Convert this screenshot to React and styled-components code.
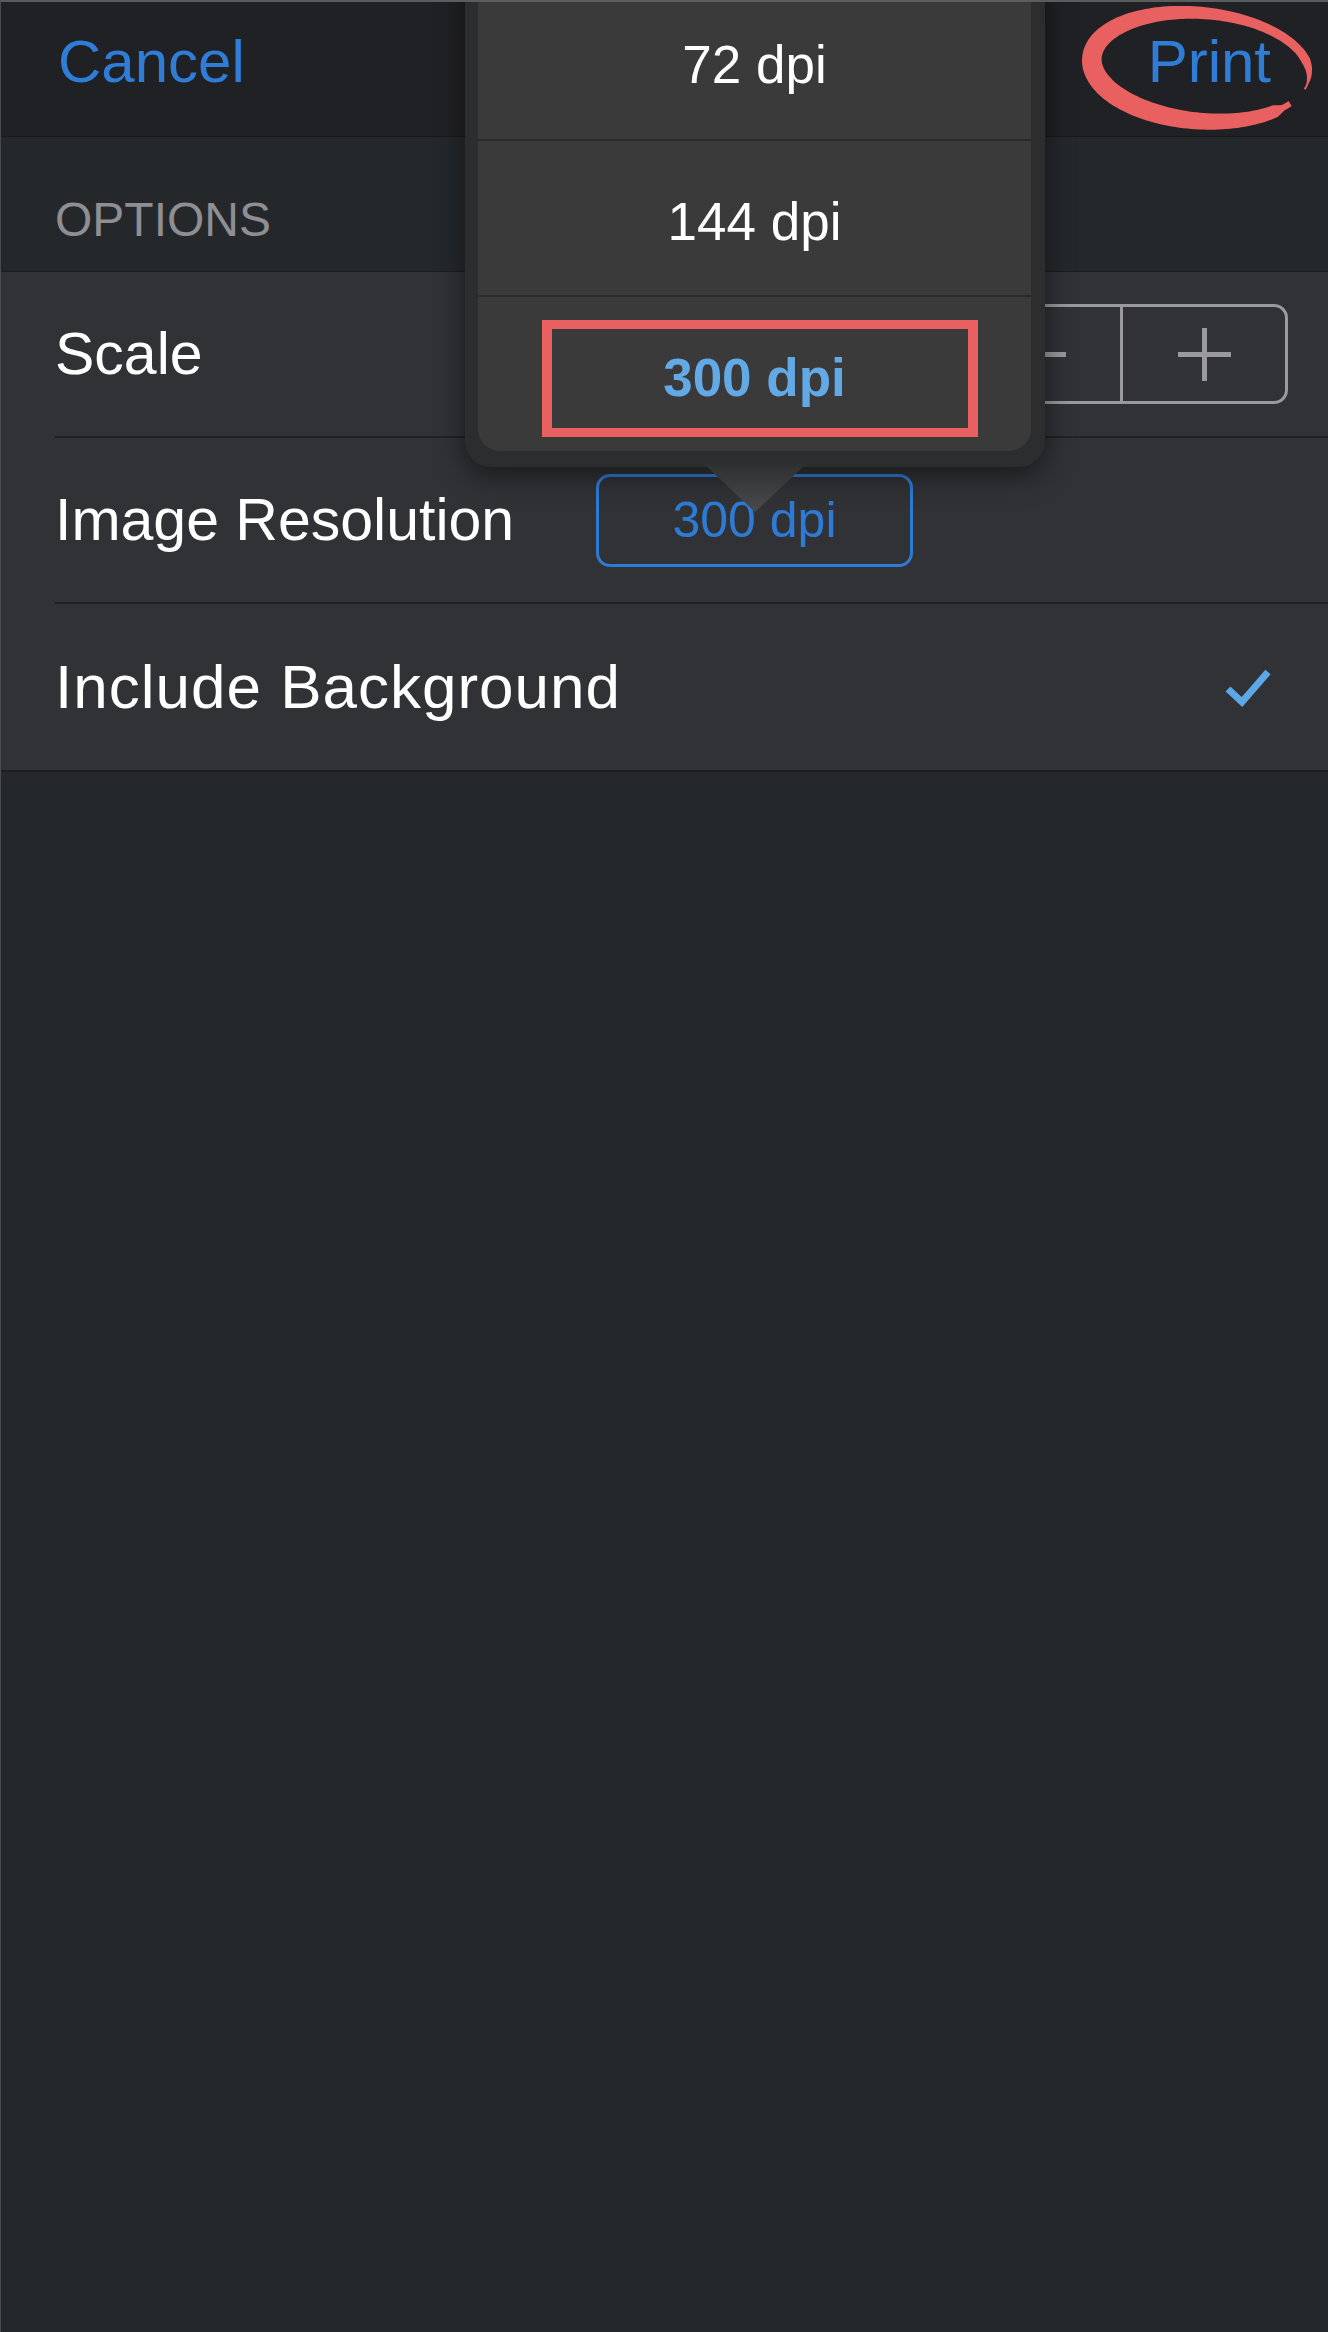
import React from 'react';
import styled, { createGlobalStyle } from 'styled-components';

const GlobalStyle = createGlobalStyle`
  html, body {
    margin: 0;
    padding: 0;
    background: #25282b;
  }
  body {
    font-family: "Liberation Sans", Arial, sans-serif;
  }
  * {
    box-sizing: border-box;
  }
`;

const Screen = styled.div`
  position: relative;
  width: 1328px;
  height: 2332px;
  overflow: hidden;
  display: flex;
  flex-direction: column;
  background: #25282b;
  border-top: 2px solid #5b5c5e;
  border-left: 1px solid #4a4b4d;
`;

const NavBar = styled.header`
  position: relative;
  flex: none;
  height: 135px;
  display: flex;
  align-items: center;
  justify-content: space-between;
  padding: 0 57px 14px;
  background: #202124;
  border-bottom: 1px solid #19191b;
`;

const NavButton = styled.button`
  border: none;
  background: none;
  padding: 0;
  font-family: inherit;
  font-size: 60px;
  line-height: 60px;
  color: #2f7dd7;
`;

const Circled = styled.svg`
  position: absolute;
  top: 0;
  right: 0;
  width: 258px;
  height: 135px;
  pointer-events: none;
`;

const SectionHeader = styled.div`
  flex: none;
  height: 134px;
  display: flex;
  align-items: flex-end;
  padding: 0 0 27px 54px;
  font-size: 48px;
  line-height: 48px;
  color: #8e8e93;
  text-transform: uppercase;
`;

const Group = styled.section`
  flex: none;
  background: #313236;
  border-top: 1px solid #1d1e20;
  border-bottom: 2px solid #1d1e20;
`;

const Row = styled.div`
  height: 166px;
  padding-left: 54px;
`;

const RowInner = styled.div`
  height: 100%;
  display: flex;
  align-items: center;
  padding-right: 40px;
  border-bottom: ${(p) => (p.$last ? 'none' : '2px solid #212225')};
`;

const Label = styled.div`
  flex: ${(p) => (p.$width ? `0 0 ${p.$width}px` : '1')};
  font-size: ${(p) => p.$size || 59}px;
  letter-spacing: ${(p) => p.$spacing || 0}px;
  line-height: 1;
  color: #ffffff;
`;

const Stepper = styled.div`
  margin-left: auto;
  display: flex;
  width: 333px;
  height: 100px;
  border: 3px solid #9a9a9e;
  border-radius: 14px;
  overflow: hidden;
`;

const StepperHalf = styled.div`
  flex: 1;
  display: flex;
  align-items: center;
  justify-content: center;

  & + & {
    border-left: 3px solid #9a9a9e;
  }
`;

const ResolutionButton = styled.div`
  width: 317px;
  height: 93px;
  display: flex;
  align-items: center;
  justify-content: center;
  border: 3px solid #2e7bd5;
  border-radius: 14px;
  font-size: 50px;
  line-height: 1;
  color: #2e7bd5;
`;

const Check = styled.svg`
  margin-left: auto;
  margin-right: 16px;
  width: 48px;
  height: 44px;
`;

const Popover = styled.div`
  position: absolute;
  top: -32px;
  left: 464px;
  width: 580px;
  padding: 13px 14px 16px 13px;
  background: #2c2d2f;
  border-radius: 26px;
  box-shadow: 0 8px 28px rgba(0, 0, 0, 0.5);
  z-index: 5;
`;

const OptionList = styled.div`
  background: #3a3a3a;
  border-radius: 22px;
  overflow: hidden;
`;

const Option = styled.div`
  position: relative;
  height: 156px;
  display: flex;
  align-items: center;
  justify-content: center;
  padding-top: 6px;
  border-top: ${(p) => (p.$first ? 'none' : '2px solid #2a2a2b')};
  font-size: 53px;
  line-height: 1;
  font-weight: ${(p) => (p.$selected ? 700 : 400)};
  color: ${(p) => (p.$selected ? '#63a9e6' : '#ffffff')};
`;

const Highlight = styled.div`
  position: absolute;
  top: 23px;
  left: 64px;
  right: 53px;
  bottom: 14px;
  border: solid #e8605f;
  border-width: 9px 10px;
`;

const Arrow = styled.svg`
  position: absolute;
  top: calc(100% - 4px);
  left: 50%;
  transform: translateX(-50%);
  width: 104px;
  height: 49px;
`;

// hand drawn ring around "Print", in page coordinates
const brushPath = (() => {
  const cx = 1200.5;
  const cy = 67;
  const rx = 109;
  const ry = 54;
  const rot = (5 * Math.PI) / 180;
  const t0 = 32;
  const t1 = 374;
  const outer = [];
  const inner = [];
  const turn = ([x, y]) => [
    cx + x * Math.cos(rot) - y * Math.sin(rot),
    cy + x * Math.sin(rot) + y * Math.cos(rot),
  ];
  for (let d = t0; d <= t1; d += 2) {
    const t = (d * Math.PI) / 180;
    let w = 14.5 - 5 * Math.cos(t) + 2.5 * Math.sin(t);
    w *= Math.min(1, Math.max(0.5, (d - t0) / 12));
    w *= Math.min(1, Math.max(0.2, (t1 - d) / 30));
    const px = Math.cos(t);
    const py = Math.sin(t);
    let nx = px / rx;
    let ny = py / ry;
    const nl = Math.hypot(nx, ny);
    nx /= nl;
    ny /= nl;
    const mx = rx * px;
    const my = ry * py;
    outer.push(turn([mx + (nx * w) / 2, my + (ny * w) / 2]));
    inner.push(turn([mx - (nx * w) / 2, my - (ny * w) / 2]));
  }
  const pts = [...outer, ...inner.reverse()];
  return 'M' + pts.map((p) => p.map((v) => v.toFixed(1)).join(' ')).join(' L') + ' Z';
})();

const options = [
  { label: '72 dpi' },
  { label: '144 dpi' },
  { label: '300 dpi', selected: true },
];

const Plus = ({ minus }) => (
  <svg width="53" height="53" viewBox="0 0 53 53">
    <line x1="0" y1="26.5" x2="53" y2="26.5" stroke="#9a9a9e" strokeWidth="5" />
    {!minus && <line x1="26.5" y1="0" x2="26.5" y2="53" stroke="#9a9a9e" strokeWidth="5" />}
  </svg>
);

const App = () => {
  return (
    <>
      <GlobalStyle />
      <Screen>
        <NavBar>
          <NavButton>Cancel</NavButton>
          <NavButton>Print</NavButton>
          <Circled viewBox="1070 2 258 135">
            <path d={brushPath} fill="#e8605f" />
          </Circled>
        </NavBar>

        <SectionHeader>Options</SectionHeader>

        <Group>
          <Row>
            <RowInner>
              <Label>Scale</Label>
              <Stepper>
                <StepperHalf>
                  <Plus minus />
                </StepperHalf>
                <StepperHalf>
                  <Plus />
                </StepperHalf>
              </Stepper>
            </RowInner>
          </Row>
          <Row>
            <RowInner>
              <Label $width={541}>Image Resolution</Label>
              <ResolutionButton>300 dpi</ResolutionButton>
            </RowInner>
          </Row>
          <Row>
            <RowInner $last>
              <Label $size={62} $spacing={1}>Include Background</Label>
              <Check viewBox="0 0 48 44">
                <polyline
                  points="4,24 18,37 44,7"
                  fill="none"
                  stroke="#5ca7e6"
                  strokeWidth="7"
                  strokeLinejoin="miter"
                />
              </Check>
            </RowInner>
          </Row>
        </Group>

        <Popover>
          <OptionList>
            {options.map((o, i) => (
              <Option key={o.label} $first={i === 0} $selected={o.selected}>
                {o.label}
                {o.selected && <Highlight />}
              </Option>
            ))}
          </OptionList>
          <Arrow viewBox="0 0 104 49">
            <defs>
              <linearGradient id="arrowFill" x1="0" y1="0" x2="0" y2="1">
                <stop offset="0" stopColor="#2e2f31" />
                <stop offset="1" stopColor="#4b4b4e" />
              </linearGradient>
            </defs>
            <polygon points="0,0 104,0 52,49" fill="url(#arrowFill)" />
          </Arrow>
        </Popover>
      </Screen>
    </>
  );
};

export default App;
